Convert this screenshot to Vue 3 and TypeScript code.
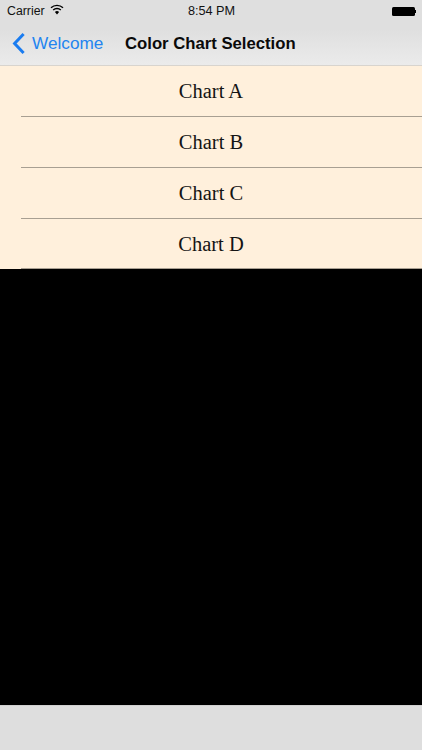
<script setup lang="ts">
const charts: string[] = ['Chart A', 'Chart B', 'Chart C', 'Chart D']
</script>

<template>
  <div class="screen">
    <header class="top">
      <div class="status">
        <div class="status-left">
          <span class="carrier">Carrier</span>
          <svg class="wifi" width="14" height="11" viewBox="0 0 14 11">
            <path d="M1 3.8 A8.6 8.6 0 0 1 13 3.8" fill="none" stroke="#000" stroke-width="1.4" />
            <path d="M3.2 6 A5.4 5.4 0 0 1 10.8 6" fill="none" stroke="#000" stroke-width="1.4" />
            <path d="M4.9 8 L7 10.4 L9.1 8 A3 3 0 0 0 4.9 8 Z" fill="#000" />
          </svg>
        </div>
        <span class="time">8:54 PM</span>
        <div class="battery">
          <span class="cell"></span>
          <span class="nub"></span>
        </div>
      </div>
      <nav class="nav">
        <div class="back">
          <svg class="chev" width="14" height="23" viewBox="0 0 14 23">
            <path d="M11.6 2 L2.6 11.5 L11.6 21" fill="none" stroke="#1a7cf0" stroke-width="3" />
          </svg>
          <span>Welcome</span>
        </div>
        <span class="title">Color Chart Selection</span>
      </nav>
    </header>
    <ul class="list">
      <li v-for="c in charts" :key="c" class="row">{{ c }}</li>
    </ul>
    <main class="black"></main>
    <footer class="bottom"></footer>
  </div>
</template>

<style scoped>
.screen {
  width: 422px;
  height: 750px;
  display: flex;
  flex-direction: column;
  font-family: "Liberation Sans", Arial, sans-serif;
  background: #000;
  overflow: hidden;
}
.top {
  height: 66px;
  flex: none;
  box-sizing: border-box;
  background: linear-gradient(#dfdfdf 0%, #dfdfdf 45%, #ebebeb 100%);
  border-bottom: 1px solid #d8d4ce;
}
.status {
  height: 22px;
  display: grid;
  grid-template-columns: 1fr auto 1fr;
  align-items: center;
  padding: 0 7px;
  font-size: 12.3px;
  color: #111;
}
.status-left {
  display: flex;
  align-items: center;
  gap: 5px;
}
.wifi {
  margin-top: -3px;
}
.time {
  font-size: 12.7px;
  margin-left: 1px;
}
.battery {
  justify-self: end;
  display: flex;
  align-items: center;
  margin-right: -1px;
}
.cell {
  width: 23px;
  height: 9px;
  background: #000;
  border-radius: 1.5px;
}
.nub {
  width: 1.5px;
  height: 3px;
  background: #000;
}
.nav {
  height: 43px;
  display: flex;
  align-items: center;
  padding-left: 12px;
}
.back {
  display: flex;
  align-items: center;
  gap: 6px;
  color: #2384f0;
  font-size: 17.2px;
  width: 113px;
}
.title {
  font-size: 16.7px;
  font-weight: 700;
  color: #0a0a0a;
}
.list {
  list-style: none;
  margin: 0;
  padding: 0;
  background: #fff0dc;
  flex: none;
}
.row {
  height: 51px;
  box-sizing: border-box;
  display: flex;
  align-items: center;
  justify-content: center;
  font-family: "Liberation Serif", "Times New Roman", serif;
  font-size: 20.5px;
  color: #141414;
  position: relative;
  padding-bottom: 1px;
}
.row:last-child {
  height: 50px;
  padding-bottom: 0;
}
.row::after {
  content: "";
  position: absolute;
  left: 21px;
  right: 0;
  bottom: 0;
  height: 1px;
  background: #a89f92;
}
.black {
  flex: 1;
  background: #000;
}
.bottom {
  height: 45px;
  flex: none;
  background: #dedede;
  border-top: 1px solid #d0d0d0;
  box-sizing: border-box;
}
</style>
